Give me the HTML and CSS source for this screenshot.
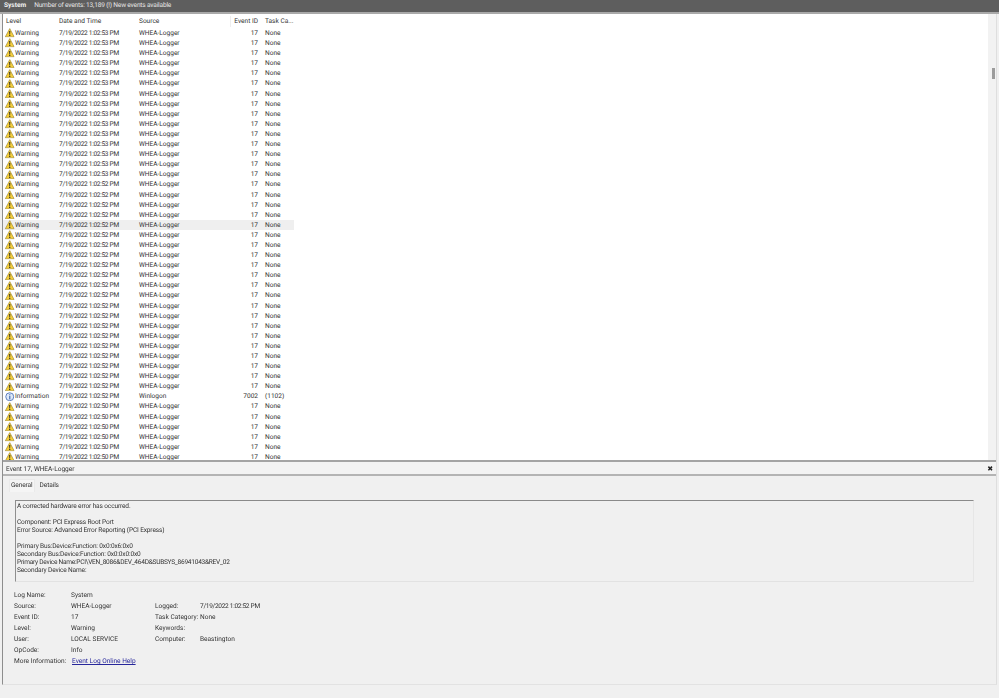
FILE: index.html
```html
<!DOCTYPE html>
<html lang="en">
<head>
<meta charset="utf-8">
<title>Event Viewer</title>
<link rel="stylesheet" href="styles.css">
</head>
<body>
<svg class="defs" width="0" height="0" aria-hidden="true">
  <symbol id="warn" viewBox="0 0 10 10">
    <path d="M5 .6 9.7 9.3H.3Z" fill="#f5cf3b" stroke="#8f7a2a" stroke-width=".6" stroke-linejoin="round"/>
    <path d="M4.4 3.2h1.2l-.25 3.6h-.7Z" fill="#222"/>
    <rect x="4.4" y="7.3" width="1.2" height="1.1" fill="#222"/>
  </symbol>
  <symbol id="info" viewBox="0 0 10 10">
    <circle cx="5" cy="5" r="4.2" fill="#dfe9f8" stroke="#4a6fb5" stroke-width=".9"/>
    <rect x="4.5" y="4.2" width="1.1" height="3.6" fill="#2f5aa8"/>
    <rect x="4.5" y="2.4" width="1.1" height="1.1" fill="#2f5aa8"/>
  </symbol>
</svg>
<header class="titlebar"><b>System</b><span class="tight">Number of events: 13,189 (!) New events available</span></header>
<main class="shell">
  <section class="list">
    <div class="table">
      <div class="row head"><span class="c-level">Level</span><span>Date and Time</span><span>Source</span><span class="num">Event ID</span><span>Task Ca...</span></div>
      <div class="row"><span class="c-level"><svg class="ico"><use href="#warn"/></svg>Warning</span><span class="d">7/19/2022 1:02:53 PM</span><span>WHEA-Logger</span><span class="num">17</span><span>None</span></div>
      <div class="row"><span class="c-level"><svg class="ico"><use href="#warn"/></svg>Warning</span><span class="d">7/19/2022 1:02:53 PM</span><span>WHEA-Logger</span><span class="num">17</span><span>None</span></div>
      <div class="row"><span class="c-level"><svg class="ico"><use href="#warn"/></svg>Warning</span><span class="d">7/19/2022 1:02:53 PM</span><span>WHEA-Logger</span><span class="num">17</span><span>None</span></div>
      <div class="row"><span class="c-level"><svg class="ico"><use href="#warn"/></svg>Warning</span><span class="d">7/19/2022 1:02:53 PM</span><span>WHEA-Logger</span><span class="num">17</span><span>None</span></div>
      <div class="row"><span class="c-level"><svg class="ico"><use href="#warn"/></svg>Warning</span><span class="d">7/19/2022 1:02:53 PM</span><span>WHEA-Logger</span><span class="num">17</span><span>None</span></div>
      <div class="row"><span class="c-level"><svg class="ico"><use href="#warn"/></svg>Warning</span><span class="d">7/19/2022 1:02:53 PM</span><span>WHEA-Logger</span><span class="num">17</span><span>None</span></div>
      <div class="row"><span class="c-level"><svg class="ico"><use href="#warn"/></svg>Warning</span><span class="d">7/19/2022 1:02:53 PM</span><span>WHEA-Logger</span><span class="num">17</span><span>None</span></div>
      <div class="row"><span class="c-level"><svg class="ico"><use href="#warn"/></svg>Warning</span><span class="d">7/19/2022 1:02:53 PM</span><span>WHEA-Logger</span><span class="num">17</span><span>None</span></div>
      <div class="row"><span class="c-level"><svg class="ico"><use href="#warn"/></svg>Warning</span><span class="d">7/19/2022 1:02:53 PM</span><span>WHEA-Logger</span><span class="num">17</span><span>None</span></div>
      <div class="row"><span class="c-level"><svg class="ico"><use href="#warn"/></svg>Warning</span><span class="d">7/19/2022 1:02:53 PM</span><span>WHEA-Logger</span><span class="num">17</span><span>None</span></div>
      <div class="row"><span class="c-level"><svg class="ico"><use href="#warn"/></svg>Warning</span><span class="d">7/19/2022 1:02:53 PM</span><span>WHEA-Logger</span><span class="num">17</span><span>None</span></div>
      <div class="row"><span class="c-level"><svg class="ico"><use href="#warn"/></svg>Warning</span><span class="d">7/19/2022 1:02:53 PM</span><span>WHEA-Logger</span><span class="num">17</span><span>None</span></div>
      <div class="row"><span class="c-level"><svg class="ico"><use href="#warn"/></svg>Warning</span><span class="d">7/19/2022 1:02:53 PM</span><span>WHEA-Logger</span><span class="num">17</span><span>None</span></div>
      <div class="row"><span class="c-level"><svg class="ico"><use href="#warn"/></svg>Warning</span><span class="d">7/19/2022 1:02:53 PM</span><span>WHEA-Logger</span><span class="num">17</span><span>None</span></div>
      <div class="row"><span class="c-level"><svg class="ico"><use href="#warn"/></svg>Warning</span><span class="d">7/19/2022 1:02:53 PM</span><span>WHEA-Logger</span><span class="num">17</span><span>None</span></div>
      <div class="row"><span class="c-level"><svg class="ico"><use href="#warn"/></svg>Warning</span><span class="d">7/19/2022 1:02:52 PM</span><span>WHEA-Logger</span><span class="num">17</span><span>None</span></div>
      <div class="row"><span class="c-level"><svg class="ico"><use href="#warn"/></svg>Warning</span><span class="d">7/19/2022 1:02:52 PM</span><span>WHEA-Logger</span><span class="num">17</span><span>None</span></div>
      <div class="row"><span class="c-level"><svg class="ico"><use href="#warn"/></svg>Warning</span><span class="d">7/19/2022 1:02:52 PM</span><span>WHEA-Logger</span><span class="num">17</span><span>None</span></div>
      <div class="row"><span class="c-level"><svg class="ico"><use href="#warn"/></svg>Warning</span><span class="d">7/19/2022 1:02:52 PM</span><span>WHEA-Logger</span><span class="num">17</span><span>None</span></div>
      <div class="row selected"><span class="c-level"><svg class="ico"><use href="#warn"/></svg>Warning</span><span class="d">7/19/2022 1:02:52 PM</span><span>WHEA-Logger</span><span class="num">17</span><span>None</span></div>
      <div class="row"><span class="c-level"><svg class="ico"><use href="#warn"/></svg>Warning</span><span class="d">7/19/2022 1:02:52 PM</span><span>WHEA-Logger</span><span class="num">17</span><span>None</span></div>
      <div class="row"><span class="c-level"><svg class="ico"><use href="#warn"/></svg>Warning</span><span class="d">7/19/2022 1:02:52 PM</span><span>WHEA-Logger</span><span class="num">17</span><span>None</span></div>
      <div class="row"><span class="c-level"><svg class="ico"><use href="#warn"/></svg>Warning</span><span class="d">7/19/2022 1:02:52 PM</span><span>WHEA-Logger</span><span class="num">17</span><span>None</span></div>
      <div class="row"><span class="c-level"><svg class="ico"><use href="#warn"/></svg>Warning</span><span class="d">7/19/2022 1:02:52 PM</span><span>WHEA-Logger</span><span class="num">17</span><span>None</span></div>
      <div class="row"><span class="c-level"><svg class="ico"><use href="#warn"/></svg>Warning</span><span class="d">7/19/2022 1:02:52 PM</span><span>WHEA-Logger</span><span class="num">17</span><span>None</span></div>
      <div class="row"><span class="c-level"><svg class="ico"><use href="#warn"/></svg>Warning</span><span class="d">7/19/2022 1:02:52 PM</span><span>WHEA-Logger</span><span class="num">17</span><span>None</span></div>
      <div class="row"><span class="c-level"><svg class="ico"><use href="#warn"/></svg>Warning</span><span class="d">7/19/2022 1:02:52 PM</span><span>WHEA-Logger</span><span class="num">17</span><span>None</span></div>
      <div class="row"><span class="c-level"><svg class="ico"><use href="#warn"/></svg>Warning</span><span class="d">7/19/2022 1:02:52 PM</span><span>WHEA-Logger</span><span class="num">17</span><span>None</span></div>
      <div class="row"><span class="c-level"><svg class="ico"><use href="#warn"/></svg>Warning</span><span class="d">7/19/2022 1:02:52 PM</span><span>WHEA-Logger</span><span class="num">17</span><span>None</span></div>
      <div class="row"><span class="c-level"><svg class="ico"><use href="#warn"/></svg>Warning</span><span class="d">7/19/2022 1:02:52 PM</span><span>WHEA-Logger</span><span class="num">17</span><span>None</span></div>
      <div class="row"><span class="c-level"><svg class="ico"><use href="#warn"/></svg>Warning</span><span class="d">7/19/2022 1:02:52 PM</span><span>WHEA-Logger</span><span class="num">17</span><span>None</span></div>
      <div class="row"><span class="c-level"><svg class="ico"><use href="#warn"/></svg>Warning</span><span class="d">7/19/2022 1:02:52 PM</span><span>WHEA-Logger</span><span class="num">17</span><span>None</span></div>
      <div class="row"><span class="c-level"><svg class="ico"><use href="#warn"/></svg>Warning</span><span class="d">7/19/2022 1:02:52 PM</span><span>WHEA-Logger</span><span class="num">17</span><span>None</span></div>
      <div class="row"><span class="c-level"><svg class="ico"><use href="#warn"/></svg>Warning</span><span class="d">7/19/2022 1:02:52 PM</span><span>WHEA-Logger</span><span class="num">17</span><span>None</span></div>
      <div class="row"><span class="c-level"><svg class="ico"><use href="#warn"/></svg>Warning</span><span class="d">7/19/2022 1:02:52 PM</span><span>WHEA-Logger</span><span class="num">17</span><span>None</span></div>
      <div class="row"><span class="c-level"><svg class="ico"><use href="#warn"/></svg>Warning</span><span class="d">7/19/2022 1:02:52 PM</span><span>WHEA-Logger</span><span class="num">17</span><span>None</span></div>
      <div class="row"><span class="c-level"><svg class="ico"><use href="#info"/></svg>Information</span><span class="d">7/19/2022 1:02:52 PM</span><span>Winlogon</span><span class="num">7002</span><span>(1102)</span></div>
      <div class="row"><span class="c-level"><svg class="ico"><use href="#warn"/></svg>Warning</span><span class="d">7/19/2022 1:02:50 PM</span><span>WHEA-Logger</span><span class="num">17</span><span>None</span></div>
      <div class="row"><span class="c-level"><svg class="ico"><use href="#warn"/></svg>Warning</span><span class="d">7/19/2022 1:02:50 PM</span><span>WHEA-Logger</span><span class="num">17</span><span>None</span></div>
      <div class="row"><span class="c-level"><svg class="ico"><use href="#warn"/></svg>Warning</span><span class="d">7/19/2022 1:02:50 PM</span><span>WHEA-Logger</span><span class="num">17</span><span>None</span></div>
      <div class="row"><span class="c-level"><svg class="ico"><use href="#warn"/></svg>Warning</span><span class="d">7/19/2022 1:02:50 PM</span><span>WHEA-Logger</span><span class="num">17</span><span>None</span></div>
      <div class="row"><span class="c-level"><svg class="ico"><use href="#warn"/></svg>Warning</span><span class="d">7/19/2022 1:02:50 PM</span><span>WHEA-Logger</span><span class="num">17</span><span>None</span></div>
      <div class="row"><span class="c-level"><svg class="ico"><use href="#warn"/></svg>Warning</span><span class="d">7/19/2022 1:02:50 PM</span><span>WHEA-Logger</span><span class="num">17</span><span>None</span></div>
    </div>
    <div class="scrollbar"><div class="thumb"></div></div>
  </section>
  <section class="details">
    <div class="details-head"><span>Event 17, WHEA-Logger</span><span class="close">✖</span></div>
    <div class="tabs"><span class="tab active">General</span><span class="tab">Details</span></div>
    <div class="message">
      <p>A corrected hardware error has occurred.</p>
      <p>Component: PCI Express Root Port<br>Error Source: Advanced Error Reporting (PCI Express)</p>
      <p>Primary Bus:Device:Function: 0x0:0x6:0x0<br>Secondary Bus:Device:Function: 0x0:0x0:0x0<br><span class="tighter">Primary Device Name:PCI\VEN_8086&amp;DEV_464D&amp;SUBSYS_86941043&amp;REV_02</span><br>Secondary Device Name:</p>
    </div>
    <div class="fields">
      <span>Log Name:</span><span>System</span><span></span><span></span>
      <span>Source:</span><span>WHEA-Logger</span><span>Logged:</span><span class="d">7/19/2022 1:02:52 PM</span>
      <span>Event ID:</span><span>17</span><span>Task Category:</span><span>None</span>
      <span>Level:</span><span>Warning</span><span>Keywords:</span><span></span>
      <span>User:</span><span>LOCAL SERVICE</span><span>Computer:</span><span>Beastington</span>
      <span>OpCode:</span><span>Info</span><span></span><span></span>
      <span>More Information:</span><a href="#">Event Log Online Help</a><span></span><span></span>
    </div>
  </section>
</main>
</body>
</html>
```
FILE: styles.css
```css
* { box-sizing: border-box; }
html, body { margin: 0; height: 698px; overflow: hidden; }
body {
  width: 999px;
  background: #f0f0f0;
  color: #333;
  font: 6.55px/10.1px Roboto, "Open Sans", sans-serif;
  text-rendering: geometricPrecision;
  filter: blur(.25px);
}
.defs { position: absolute; }
.d { letter-spacing: -.3px; }
.tight { letter-spacing: -.17px; }
.titlebar {
  height: 14px;
  padding: 1px 0 2px 4px;
  display: flex;
  align-items: center;
  gap: 8px;
  background: #5e5e5e;
  border-bottom: 2px solid #a9a9a9;
  color: #e6e6e6;
}
.titlebar b { font-weight: 700; color: #f2f2f2; }
.shell {
  margin: 0 2px;
  height: 671px;
  border-left: 1px solid #8d8d8d;
  border-right: 1px solid #dedede;
  border-bottom: 1px solid #e2e2e2;
}
.list {
  height: 448px;
  display: flex;
  background: #fff;
  border-bottom: 2px solid #a4a4a4;
  overflow: hidden;
}
.table { flex: 1; overflow: hidden; }
.row {
  width: 291px;
  height: 10.1px;
  display: grid;
  grid-template-columns: 56px 80px 91px 29px 1fr;
  white-space: nowrap;
}
.row.head { height: 14px; align-items: center; padding-top: 1px; }
.row.selected { background: #efefef; }
.c-level { display: flex; align-items: center; padding-left: 2px; }
.row.head .c-level { padding-left: 3px; }
.ico { width: 9.5px; height: 9.5px; flex: none; margin-right: .5px; }
.num { text-align: right; padding-right: 4px; margin-right: -3px; }
.row > span:nth-child(5) { padding-left: 6px; }
.row.head .num { border-left: 1px solid #eeeeee; }
.scrollbar {
  width: 8px;
  background: #f2f2f2;
  padding: 54px 0 0 4px;
  display: flex;
}
.thumb { width: 2.5px; height: 10.5px; background: #9c9c9c; }
.details { height: 221px; }
.details-head {
  height: 14px;
  display: flex;
  justify-content: space-between;
  align-items: center;
  padding: 3px 3px 0 3px;
  border-bottom: 2px solid #b4b4b4;
  background: #f3f3f3;
}
.close { font-size: 7px; color: #222; }
.tabs { display: flex; padding: 3px 0 0 6px; height: 24px; }
.tab { padding: 1px 0 0 5px; height: 13px; line-height: 11px; letter-spacing: -.1px; }
.tab.active { background: #f5f5f5; border: 1px solid #eaeaea; border-bottom: 0; padding: 0 1px; margin-right: 0; }
.message {
  margin-left: 12px;
  width: 959px;
  height: 82px;
  padding: 0 0 0 1px;
  border-top: 1px solid #8a8a8a;
  border-left: 1px solid #8f8f8f;
  border-bottom: 1px solid #e2e2e2;
  border-right: 1px solid #e6e6e6;
  line-height: 8px;
  letter-spacing: -.14px;
  background: #f0f0f0;
}
.tighter { letter-spacing: -.25px; }
.message p { margin: 0 0 8px; }
.message p:first-child { margin-top: 1px; }
.fields {
  margin: 8px 0 0 11px;
  display: grid;
  grid-template-columns: 57px 84px 45px auto;
  grid-auto-rows: 11px;
  width: 330px;
  line-height: 11px;
}
.fields a { color: #27279b; margin-left: 1px; white-space: nowrap; }
```
